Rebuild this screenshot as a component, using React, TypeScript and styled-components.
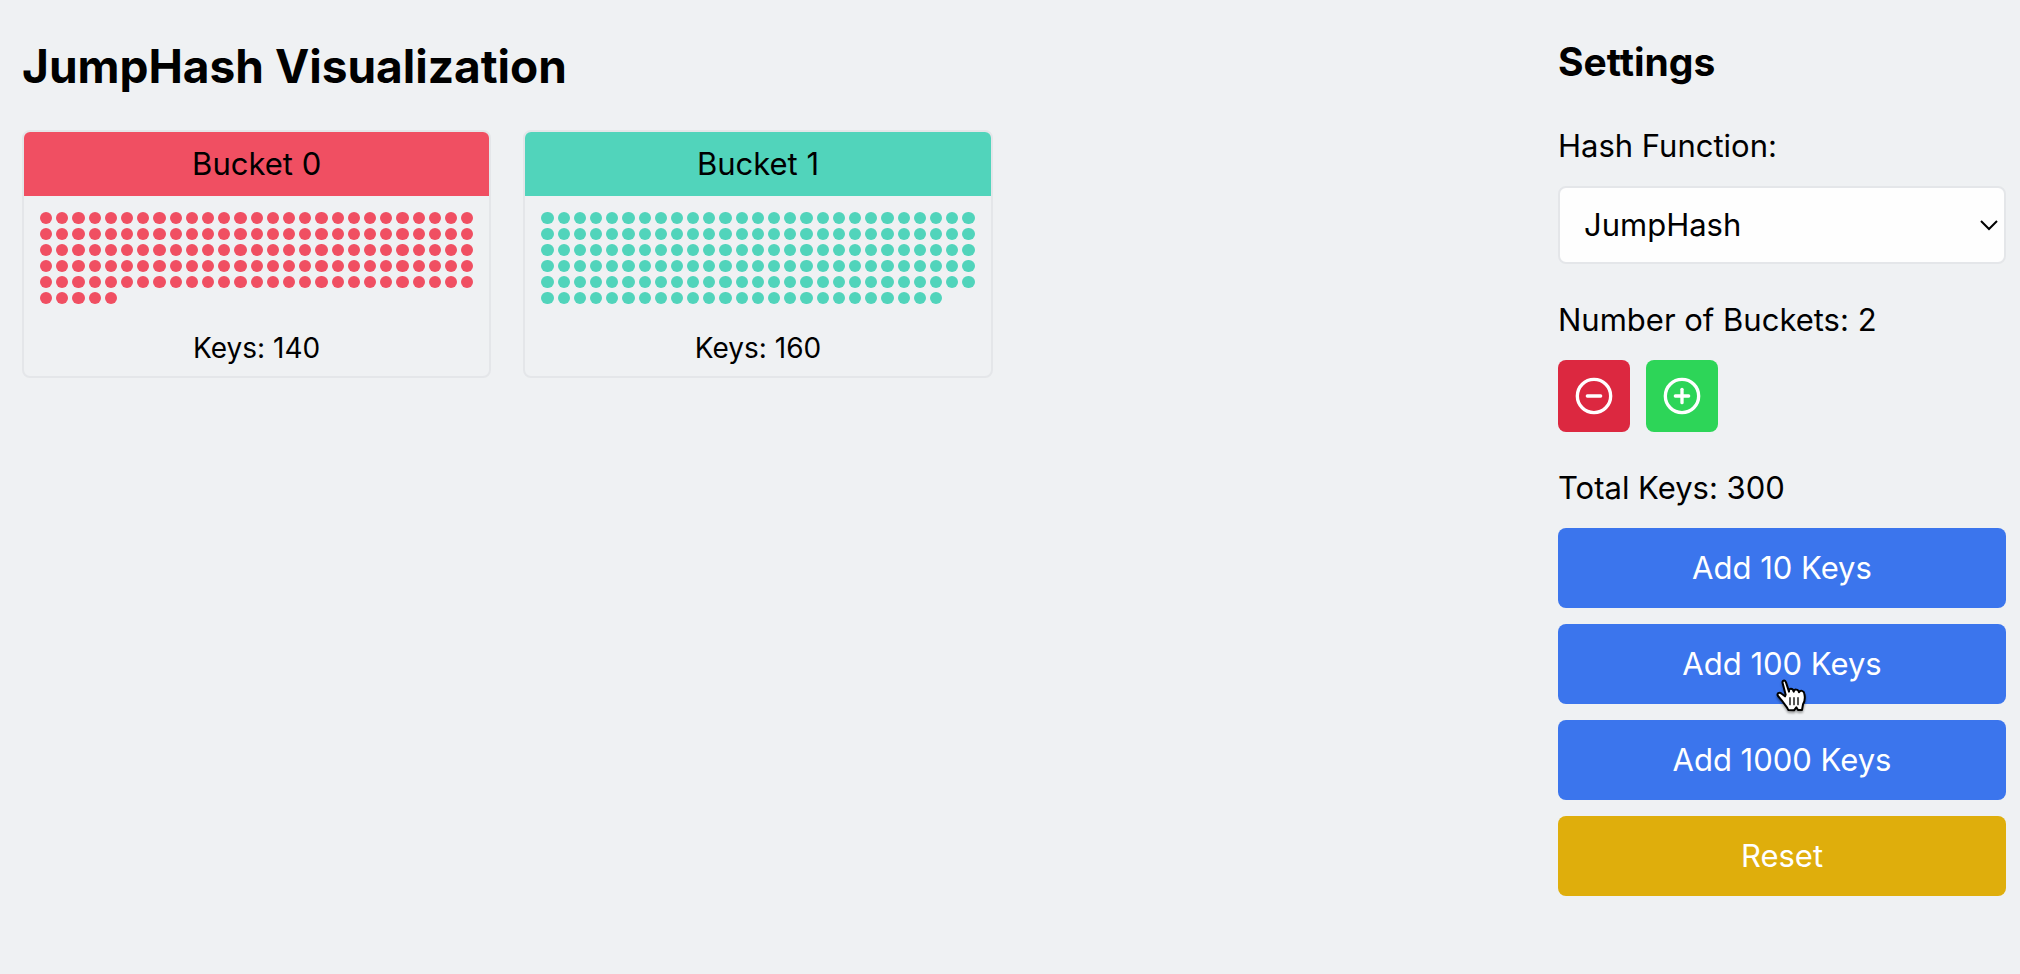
import React, { useState } from "react";
import styled, { createGlobalStyle } from "styled-components";
import { CircleMinus, CirclePlus } from "lucide-react";

const GlobalStyle = createGlobalStyle`
  *, *::before, *::after { box-sizing: border-box; }
  body {
    margin: 0;
    background: #eff1f3;
    color: #000;
    font-family: Inter, "Liberation Sans", sans-serif;
    font-size: 31px;
    line-height: 48px;
  }
`;

const Page = styled.div`
  display: flex;
  align-items: flex-start;
  gap: 64px;
  padding: 34px 14px 34px 22px;
`;

const Main = styled.main`
  flex: 1;
  min-width: 0;
`;

const Title = styled.h1`
  margin: 0 0 32px;
  font-size: 46px;
  line-height: 64px;
  font-weight: 700;
`;

const BucketGrid = styled.div`
  display: grid;
  grid-template-columns: repeat(3, 1fr);
  gap: 32px;
`;

const BucketCard = styled.section`
  border: 2px solid #e4e6e9;
  border-radius: 8px;
  overflow: hidden;
`;

const BucketHeader = styled.h2<{ $color: string }>`
  margin: 0;
  padding: 8px;
  background: ${(p) => p.$color};
  font-size: 31px;
  font-weight: 400;
  text-align: center;
`;

const DotGrid = styled.div`
  display: grid;
  grid-template-columns: repeat(auto-fill, minmax(12px, 1fr));
  gap: 4px;
  padding: 16px;
`;

const Dot = styled.span<{ $color: string }>`
  height: 12px;
  border-radius: 50%;
  background: ${(p) => p.$color};
`;

const BucketFooter = styled.p`
  margin: 0;
  padding: 8px;
  font-size: 28px;
  line-height: 40px;
  text-align: center;
`;

const Sidebar = styled.aside`
  display: flex;
  flex-direction: column;
  gap: 32px;
  width: 448px;
  flex-shrink: 0;
`;

const SidebarTitle = styled.h2`
  margin: 0;
  font-size: 39px;
  line-height: 56px;
  font-weight: 700;
`;

const Group = styled.div`
  display: flex;
  flex-direction: column;
  gap: 16px;
`;

const SelectWrap = styled.div`
  position: relative;
  display: flex;
`;

const Select = styled.select`
  appearance: none;
  width: 100%;
  height: 78px;
  padding: 0 48px 0 24px;
  border: 2px solid #e4e6e9;
  border-radius: 8px;
  background: #fefefe;
  color: #000;
  font: inherit;
`;

const Chevron = styled.svg`
  position: absolute;
  right: 8px;
  top: 50%;
  margin-top: -6px;
  pointer-events: none;
`;

const ButtonRow = styled.div`
  display: flex;
  gap: 16px;
`;

const IconButton = styled.button<{ $color: string }>`
  display: flex;
  padding: 16px;
  border: 0;
  border-radius: 8px;
  background: ${(p) => p.$color};
  color: #fff;
  cursor: pointer;
`;

const ActionButton = styled.button<{ $color: string }>`
  position: relative;
  width: 100%;
  padding: 16px;
  border: 0;
  border-radius: 8px;
  background: ${(p) => p.$color};
  color: #fff;
  font: inherit;
  cursor: pointer;
`;

const Pointer = styled.svg`
  position: absolute;
  left: calc(50% - 6px);
  top: 55px;
  overflow: visible;
  pointer-events: none;
  filter: drop-shadow(0 2px 1px rgba(0, 0, 0, 0.35));
`;

const HandPointer = () => (
  <Pointer width="32" height="34" viewBox="0 0 96 102" aria-hidden="true">
    <path
      d="M20 13 C17 5 26 1 30 10 L39 38 C38 26 51 27 53 38 C55 29 67 30 69 40 C73 32 84 35 85 44 C88 57 86 68 81 76 L78 93 L66 93 L61 85 L54 94 L37 93 C33 83 22 72 17 64 L6 51 C1 44 10 38 17 44 L27 52 L29 47 Z"
      fill="#fff"
      stroke="#000"
      strokeWidth="6"
      strokeLinejoin="round"
    />
    <path
      d="M42 56 V77 M54 56 V77 M66 56 V77"
      fill="none"
      stroke="#000"
      strokeWidth="4"
      strokeLinecap="round"
    />
  </Pointer>
);

const BUCKETS = [
  { color: "#f04f62", keys: 140 },
  { color: "#51d4bb", keys: 160 },
];

const BLUE = "#3b75ed";

export default function App() {
  const [hash, setHash] = useState("JumpHash");
  const total = BUCKETS.reduce((sum, b) => sum + b.keys, 0);

  return (
    <>
      <GlobalStyle />
      <Page>
        <Main>
          <Title>{hash} Visualization</Title>
          <BucketGrid>
            {BUCKETS.map((bucket, i) => (
              <BucketCard key={i}>
                <BucketHeader $color={bucket.color}>Bucket {i}</BucketHeader>
                <DotGrid>
                  {Array.from({ length: bucket.keys }, (_, k) => (
                    <Dot key={k} $color={bucket.color} />
                  ))}
                </DotGrid>
                <BucketFooter>Keys: {bucket.keys}</BucketFooter>
              </BucketCard>
            ))}
          </BucketGrid>
        </Main>
        <Sidebar>
          <SidebarTitle>Settings</SidebarTitle>
          <Group>
            <label htmlFor="hash">Hash Function:</label>
            <SelectWrap>
              <Select id="hash" value={hash} onChange={(e) => setHash(e.target.value)}>
                <option>JumpHash</option>
              </Select>
              <Chevron width="18" height="12" viewBox="0 0 18 12" aria-hidden="true">
                <path d="M1 2 L9 10 L17 2" fill="none" stroke="#000" strokeWidth="2" />
              </Chevron>
            </SelectWrap>
          </Group>
          <Group>
            <span>Number of Buckets: {BUCKETS.length}</span>
            <ButtonRow>
              <IconButton type="button" $color="#dc2840" aria-label="Remove bucket">
                <CircleMinus size={40} />
              </IconButton>
              <IconButton type="button" $color="#2dd558" aria-label="Add bucket">
                <CirclePlus size={40} />
              </IconButton>
            </ButtonRow>
          </Group>
          <Group>
            <span>Total Keys: {total}</span>
            <ActionButton type="button" $color={BLUE}>Add 10 Keys</ActionButton>
            <ActionButton type="button" $color={BLUE}>
              Add 100 Keys
              <HandPointer />
            </ActionButton>
            <ActionButton type="button" $color={BLUE}>Add 1000 Keys</ActionButton>
            <ActionButton type="button" $color="#dfae0c">Reset</ActionButton>
          </Group>
        </Sidebar>
      </Page>
    </>
  );
}
